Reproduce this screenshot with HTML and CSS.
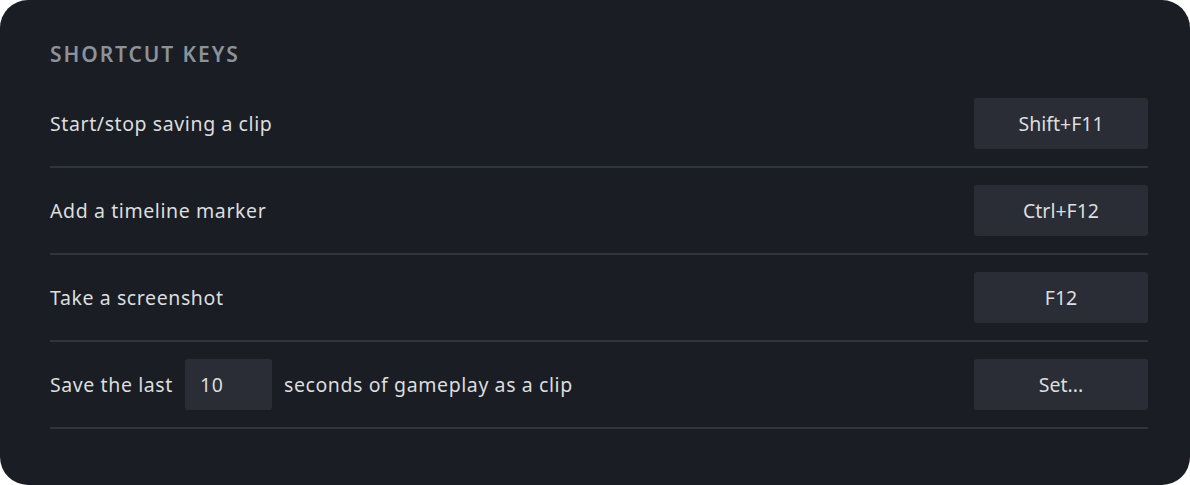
FILE: index.html
```html
<!DOCTYPE html>
<html>
<head>
<meta charset="utf-8">
<link rel="stylesheet" href="styles.css">
</head>
<body>
<div class="card">
  <h2 class="title">SHORTCUT KEYS</h2>
  <div class="row">
    <div class="label">Start/stop saving a clip</div>
    <button class="key">Shift+F11</button>
  </div>
  <div class="row">
    <div class="label">Add a timeline marker</div>
    <button class="key">Ctrl+F12</button>
  </div>
  <div class="row">
    <div class="label">Take a screenshot</div>
    <button class="key">F12</button>
  </div>
  <div class="row">
    <div class="label">Save the last <span class="num">10</span> seconds of gameplay as a clip</div>
    <button class="key">Set...</button>
  </div>
</div>
</body>
</html>
```
FILE: styles.css
```css
html, body {
  margin: 0;
  padding: 0;
  background: #ffffff;
}
body {
  font-family: "Noto Sans", "Open Sans", sans-serif;
}
.card {
  box-sizing: border-box;
  width: 1190px;
  height: 485px;
  background: #1a1d24;
  border-radius: 28px;
  padding: 37px 42px 0 50px;
}
.title {
  margin: 0 0 10px 0;
  font-size: 21px;
  line-height: 34px;
  font-weight: 600;
  color: #8b929a;
  letter-spacing: 1.9px;
}
.row {
  display: flex;
  align-items: center;
  justify-content: space-between;
  padding: 17px 0;
  border-bottom: 2px solid #30343c;
}
.label {
  display: flex;
  align-items: center;
  gap: 12px;
  font-size: 19.5px;
  letter-spacing: 0.6px;
  color: #dcdedf;
}
.num {
  box-sizing: border-box;
  width: 87px;
  height: 51px;
  display: flex;
  align-items: center;
  padding-left: 15px;
  background: #2a2d36;
  border-radius: 3px;
}
.key {
  width: 174px;
  height: 51px;
  border: none;
  border-radius: 3px;
  background: #2a2d36;
  color: #dcdedf;
  font-family: "Noto Sans", "Open Sans", sans-serif;
  font-size: 19.5px;
  padding: 0;
}
```
